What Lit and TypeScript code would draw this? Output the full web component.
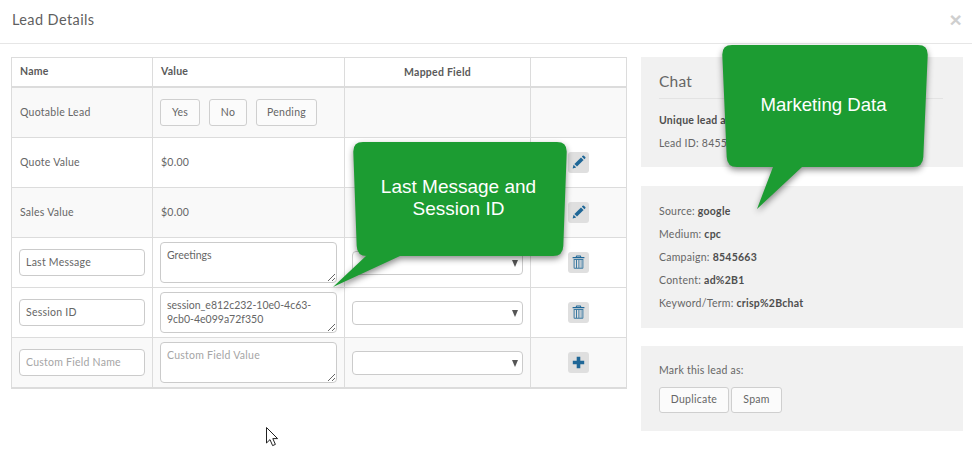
import { LitElement, html, css, svg } from "lit";
import { customElement } from "lit/decorators.js";

const pencil = svg`<path d="M4.6 16.4l1-3.6 2.6 2.6z" /><path d="M6.4 12l6.6-6.6 2.6 2.6L9 14.6z"/><path d="M13.8 4.6l.9-.9a.9.9 0 0 1 1.2 0l1.4 1.4a.9.9 0 0 1 0 1.2l-.9.9z"/>`;
const trash = svg`<path fill-rule="evenodd" d="M8.3 3.6h4.4l.7 1.4h3v1.2H4.6V5h3zM9 4.4l-.3.6h3.6l-.3-.6z"/><path fill-rule="evenodd" d="M5.6 7h9.8v8.8a1 1 0 0 1-1 1H6.6a1 1 0 0 1-1-1zM6.6 8v7.8h1.4V8zM9 8v7.8h1.4V8zM11.4 8v7.8h1.4V8zM13.4 8v7.8h1V8z" opacity=".85"/>`;
const plus = svg`<path d="M8.7 4.8h3.6v3.9h3.9v3.6h-3.9v3.9H8.7v-3.9H4.8V8.7h3.9z"/>`;

@customElement("app-root")
export class AppRoot extends LitElement {
  static styles = css`
    :host {
      display: block;
      position: relative;
      width: 972px;
      height: 455px;
      overflow: hidden;
      background: #fff;
      font-family: Lato, "Open Sans", sans-serif;
      font-size: 10.5px;
      color: #666;
      letter-spacing: 0.25px;
    }
    .head {
      box-sizing: border-box;
      height: 44px;
      border-bottom: 1px solid #e6e6e6;
      display: flex;
      align-items: center;
      justify-content: space-between;
      padding: 0 10px 5px 12px;
    }
    .title { font-size: 14.5px; color: #5f5f5f; letter-spacing: 0.4px; }
    .close { font-size: 21px; font-weight: 700; color: #cfcfcf; line-height: 1; margin-top: 1px; font-family: "Liberation Sans", sans-serif; }
    .main { display: flex; gap: 14px; padding: 13px 9px 0 11px; align-items: flex-start; }
    .table {
      display: grid;
      grid-template-columns: 141px 192px 186px 96px;
      grid-template-rows: 30px 50px 50px 50px 50px 50px 51px;
      border-top: 1px solid #dcdcdc;
      border-left: 1px solid #dcdcdc;
      flex: none;
    }
    .cell {
      box-sizing: border-box;
      border-right: 1px solid #dcdcdc;
      border-bottom: 1px solid #dcdcdc;
      display: flex;
      align-items: center;
      padding-left: 7px;
      min-width: 0;
    }
    .hd { border-bottom-width: 2px; font-weight: 700; color: #5a5a5a; padding-bottom: 1px; }
    .center { justify-content: center; padding-left: 0; }
    .grey { background: #f9f9f9; }
    .last { border-bottom-width: 2px; }
    .txt { padding-left: 8px; padding-bottom: 2px; }
    .btns { display: flex; gap: 9px; }
    .btn {
      box-sizing: border-box;
      height: 27px;
      display: flex;
      align-items: center;
      justify-content: center;
      background: #fbfbfb;
      border: 1px solid #cfcfcf;
      border-radius: 3px;
      font: inherit;
      color: #666;
      letter-spacing: inherit;
      padding: 0 0 2px;
    }
    .w40 { width: 40px; }
    .w38 { width: 38px; }
    .w61 { width: 61px; }
    .w70 { width: 70px; height: 26px; }
    .w51 { width: 51px; height: 26px; }
    input, textarea, select {
      box-sizing: border-box;
      background: #fff;
      border: 1px solid #cbcbcb;
      border-radius: 4px;
      font: inherit;
      color: #666;
      letter-spacing: inherit;
      outline: none;
      margin: 0;
    }
    input::placeholder, textarea::placeholder { color: #a5a5a5; opacity: 1; }
    input { width: 126px; height: 27px; padding: 0 6px 2px; }
    textarea { display: block; width: 177px; height: 41px; padding: 5px 6px; line-height: 14px; resize: vertical; letter-spacing: 0; }
    textarea::placeholder { letter-spacing: 0.25px; }
    .sel { position: relative; display: block; }
    select { display: block; width: 171px; height: 24px; appearance: none; }
    .sel::after {
      content: "";
      position: absolute;
      right: 5px;
      top: 9px;
      border-left: 3.5px solid transparent;
      border-right: 3.5px solid transparent;
      border-top: 7px solid #555;
    }
    .ico {
      width: 21px;
      height: 21px;
      background: #dfdfdf;
      border-radius: 3px;
      display: block;
      fill: #1f6797;
    }
    .side { width: 322px; display: flex; flex-direction: column; flex: none; }
    .panel { background: #f1f1f1; padding: 13px 18px 14px; line-height: 23px; box-sizing: border-box; }
    .p1 { height: 110px; }
    .p2 { height: 142px; margin-top: 19px; padding-top: 14px; }
    .p3 { height: 85px; margin-top: 18px; padding-bottom: 18px; }
    .chat { font-size: 15.5px; line-height: 23px; padding-bottom: 5px; border-bottom: 1px solid #e3e3e3; margin-bottom: 10px; width: 284px; color: #666; }
    b { font-weight: 700; color: #4e4e4e; }
    .acts { display: flex; gap: 2px; margin-top: 5px; line-height: normal; }
    .callout { position: absolute; color: #fff; font-family: "Liberation Sans", Arial, sans-serif; line-height: 22px; letter-spacing: 0; text-align: center; }
    .callout svg { display: block; overflow: visible; filter: drop-shadow(0 3px 3px rgba(0,0,0,.45)); }
    .callout div { position: absolute; }
    .c1 { left: 333px; top: 142px; font-size: 19px; }
    .c1 div { left: 20px; width: 211px; top: 34px; }
    .c2 { left: 722px; top: 45px; font-size: 18.6px; }
    .c2 div { left: 0; width: 203px; top: 49px; }
    .cursor { position: absolute; left: 266px; top: 427px; }
  `;

  private icon(p: unknown) {
    return html`<svg class="ico" viewBox="0 0 21 21">${p}</svg>`;
  }

  private select() {
    return html`<span class="sel"><select aria-label="Mapped Field"><option></option></select></span>`;
  }

  render() {
    return html`
      <div class="head"><span class="title">Lead Details</span><span class="close">×</span></div>
      <div class="main">
        <div class="table">
          <div class="cell hd txt">Name</div>
          <div class="cell hd txt">Value</div>
          <div class="cell hd center">Mapped Field</div>
          <div class="cell hd"></div>

          <div class="cell grey txt">Quotable Lead</div>
          <div class="cell grey">
            <div class="btns">
              <button class="btn w40">Yes</button>
              <button class="btn w38">No</button>
              <button class="btn w61">Pending</button>
            </div>
          </div>
          <div class="cell grey"></div>
          <div class="cell grey"></div>

          <div class="cell txt">Quote Value</div>
          <div class="cell txt">$0.00</div>
          <div class="cell"></div>
          <div class="cell center">${this.icon(pencil)}</div>

          <div class="cell grey txt">Sales Value</div>
          <div class="cell grey txt">$0.00</div>
          <div class="cell grey"></div>
          <div class="cell grey center">${this.icon(pencil)}</div>

          <div class="cell"><input value="Last Message" /></div>
          <div class="cell"><textarea>Greetings</textarea></div>
          <div class="cell">${this.select()}</div>
          <div class="cell center">${this.icon(trash)}</div>

          <div class="cell"><input value="Session ID" /></div>
          <div class="cell"><textarea>session_e812c232-10e0-4c63-9cb0-4e099a72f350</textarea></div>
          <div class="cell">${this.select()}</div>
          <div class="cell center">${this.icon(trash)}</div>

          <div class="cell grey last"><input placeholder="Custom Field Name" /></div>
          <div class="cell grey last"><textarea placeholder="Custom Field Value"></textarea></div>
          <div class="cell grey last">${this.select()}</div>
          <div class="cell grey last center">${this.icon(plus)}</div>
        </div>

        <div class="side">
          <div class="panel p1">
            <div class="chat">Chat</div>
            <div><b>Unique lead a</b></div>
            <div>Lead ID: 8455</div>
          </div>
          <div class="panel p2">
            <div>Source: <b>google</b></div>
            <div>Medium: <b>cpc</b></div>
            <div>Campaign: <b>8545663</b></div>
            <div>Content: <b>ad%2B1</b></div>
            <div>Keyword/Term: <b>crisp%2Bchat</b></div>
          </div>
          <div class="panel p3">
            <div>Mark this lead as:</div>
            <div class="acts">
              <button class="btn w70">Duplicate</button>
              <button class="btn w51">Spam</button>
            </div>
          </div>
        </div>
      </div>

      <div class="callout c1">
        <svg width="235" height="146" viewBox="0 0 235 146" fill="#1c9c32">
          <path d="M30 0H224Q234 0 233.7 10L230.3 104Q230 114 220 114H67L0 145L33 114H34Q24 114 23.7 104L20.3 10Q20 0 30 0Z"/>
        </svg>
        <div>Last Message and<br />Session ID</div>
      </div>
      <div class="callout c2">
        <svg width="206" height="165" viewBox="0 0 206 165" fill="#1c9c32">
          <path d="M10 0H196Q206 0 205.7 10L201.3 112Q201 122 191 122H80L35 164L51 122H15Q5 122 4.7 112L.3 10Q0 0 10 0Z"/>
        </svg>
        <div>Marketing Data</div>
      </div>
      <svg class="cursor" width="13" height="20" viewBox="0 0 13 20">
        <path d="M.5.5V16L4 12.6 6.6 18.6 9.4 17.4 6.8 11.6H11.6Z" fill="#fff" stroke="#222" stroke-width="1"/>
      </svg>
    `;
  }
}
